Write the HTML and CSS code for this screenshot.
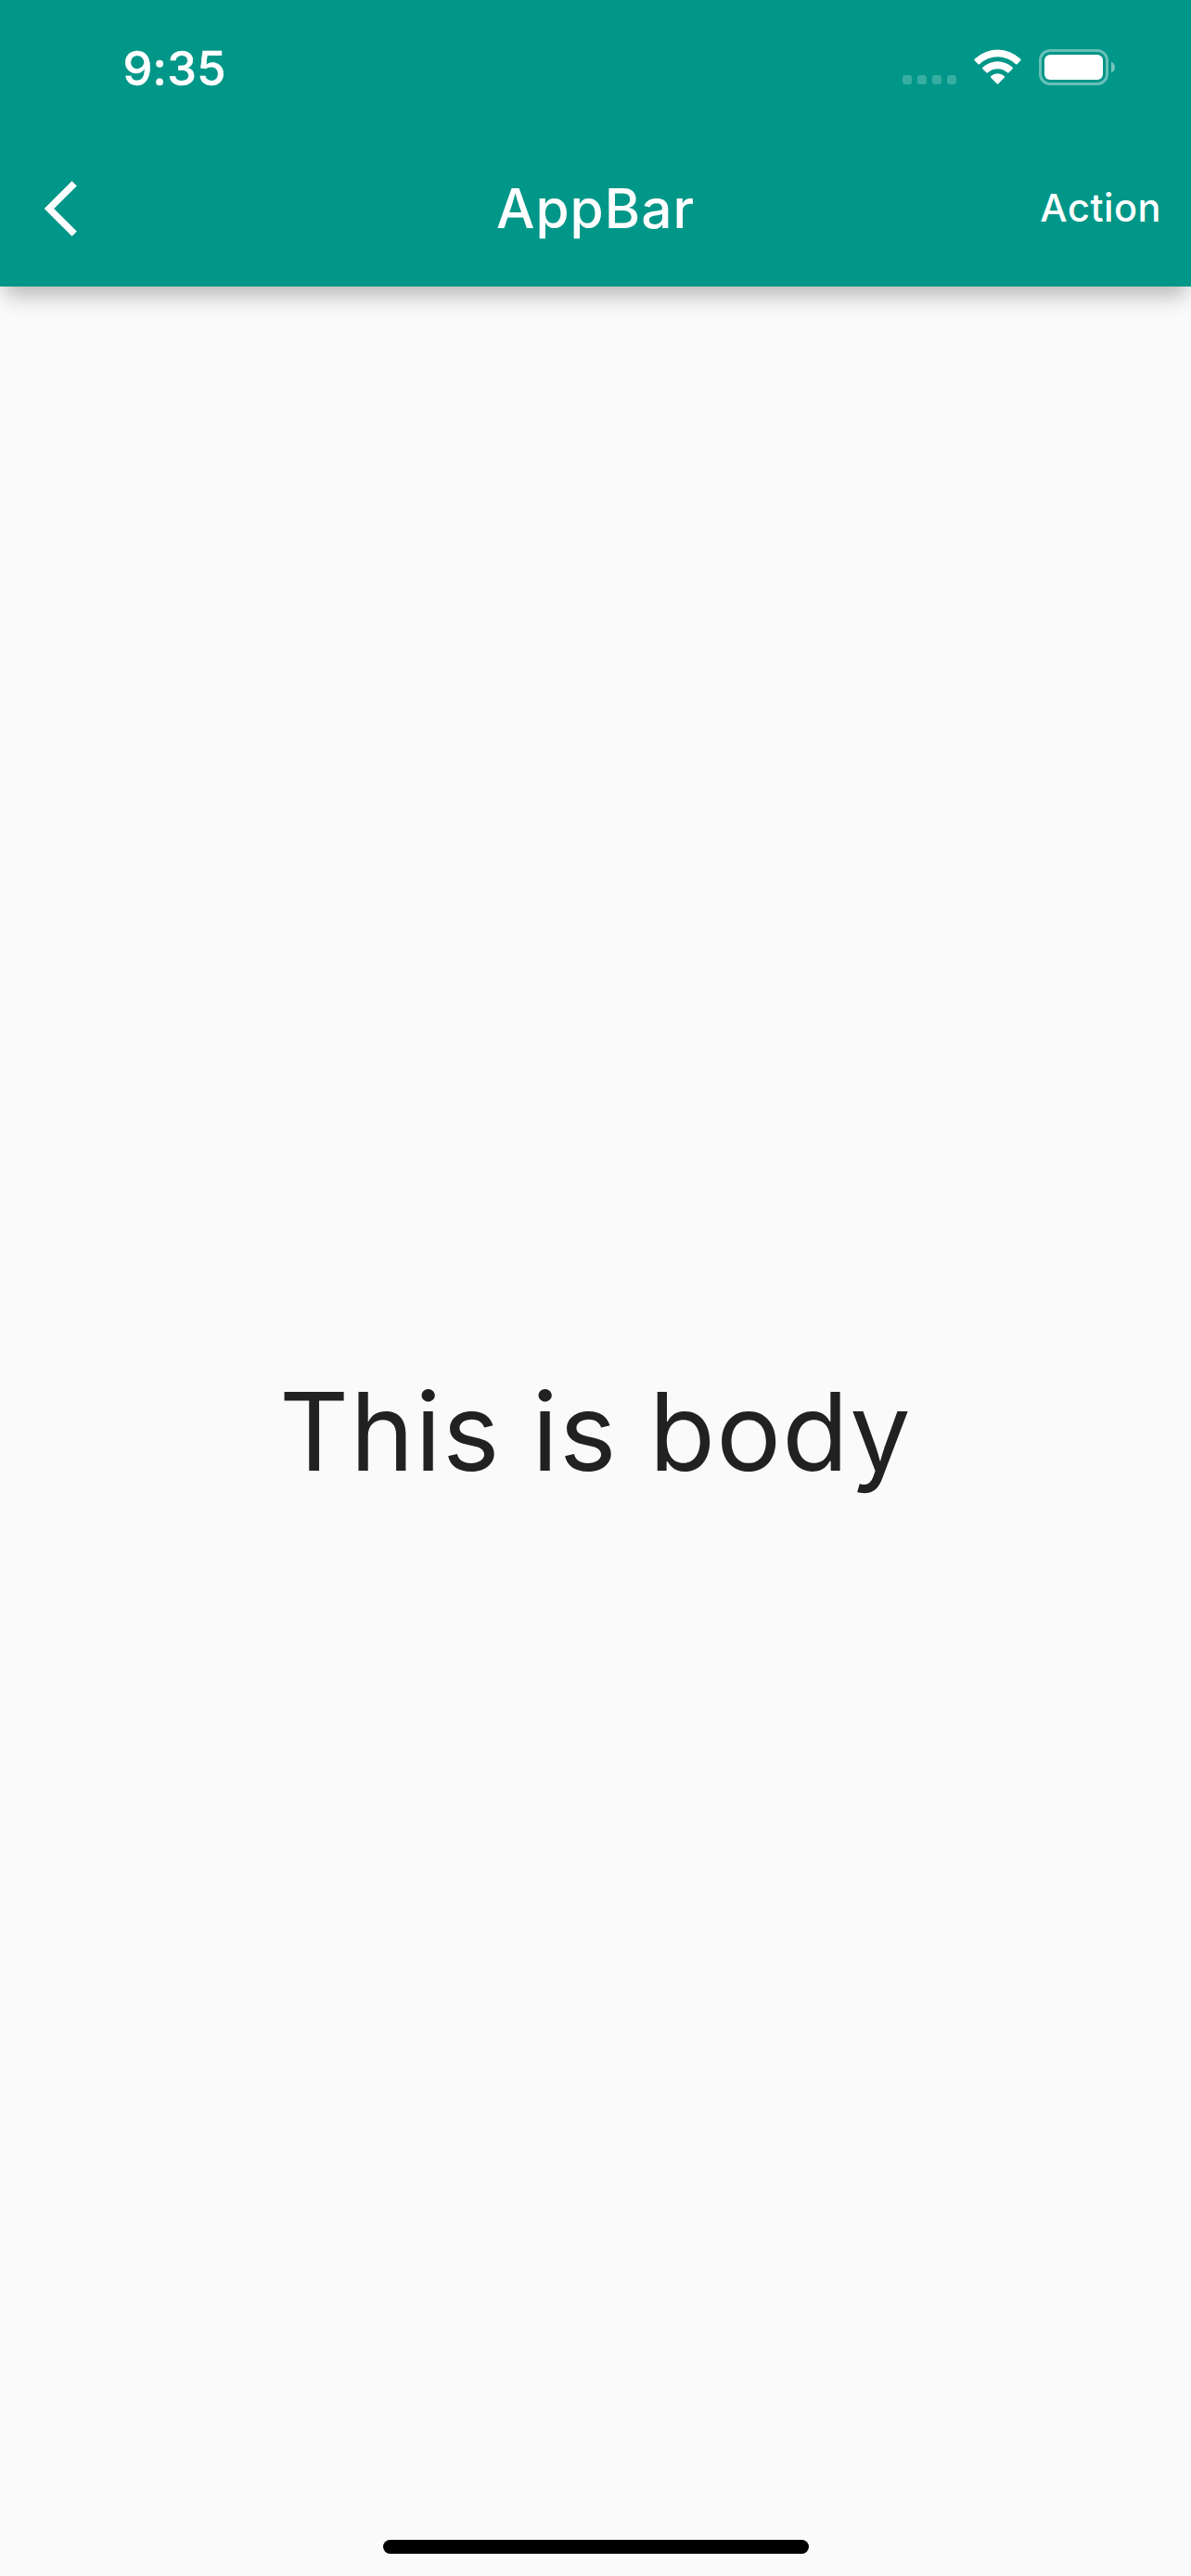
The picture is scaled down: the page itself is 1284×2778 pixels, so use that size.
FILE: index.html
```html
<!DOCTYPE html>
<html lang="en">
<head>
<meta charset="utf-8">
<title>AppBar</title>
<link rel="stylesheet" href="styles.css">
</head>
<body>
<div class="screen">
  <header class="header">
    <div class="status-bar">
      <span class="time">9:35</span>
      <svg class="status-icons" viewBox="0 0 260 70" fill="#fff" aria-hidden="true">
        <g opacity=".22">
          <rect x="13" y="41" width="10" height="10" rx="3"/>
          <rect x="29" y="41" width="10" height="10" rx="3"/>
          <rect x="45" y="41" width="10" height="10" rx="3"/>
          <rect x="61" y="41" width="10" height="10" rx="3"/>
        </g>
        <path d="M90.8 23.6 Q90 24.6 90.9 25.5 L94.5 29.2 Q95.4 30 96.3 29.1 A27.5 27.5 0 0 1 134.7 29.1 Q135.6 30 136.5 29.2 L140.1 25.5 Q141 24.6 140.2 23.6 A35.4 35.4 0 0 0 90.8 23.6Z"/>
        <path d="M99.5 32.6 Q98.6 33.6 99.5 34.5 L103.4 38.3 Q104.2 39 105.1 38.2 A15.6 15.6 0 0 1 125.9 38.2 Q126.8 39 127.6 38.3 L131.5 34.5 Q132.4 33.6 131.5 32.6 A23.5 23.5 0 0 0 99.5 32.6Z"/>
        <path d="M108.3 42 Q107.4 42.9 108.3 43.8 L114.6 50.2 Q115.5 51 116.4 50.2 L122.7 43.8 Q123.6 42.9 122.7 42 A11 11 0 0 0 108.3 42Z"/>
        <rect x="161.5" y="14.5" width="72" height="36" rx="10.5" fill="none" stroke="#fff" stroke-width="3" opacity=".4"/>
        <path d="M238 26.5 Q242 28.5 242 32.5 Q242 36.5 238 38.5Z" opacity=".45"/>
        <rect x="166" y="19" width="63" height="27" rx="6"/>
      </svg>
    </div>
    <nav class="toolbar">
      <button class="back" aria-label="Back">
        <svg class="back-icon" viewBox="0 0 36 60" aria-hidden="true"><path d="M32.2 2.8 L5 30 L32.2 57.2" fill="none" stroke="#fff" stroke-width="7.4"/></svg>
      </button>
      <h1 class="title">AppBar</h1>
      <button class="action">Action</button>
    </nav>
  </header>
  <main class="body"><p class="body-text">This is body</p></main>
  <footer class="footer"><div class="home-indicator"></div></footer>
</div>
</body>
</html>
```
FILE: styles.css
```css
* { box-sizing: border-box; }
body { margin: 0; }
.screen {
  width: 1284px;
  height: 2778px;
  display: flex;
  flex-direction: column;
  background: #fafafa;
  font-family: Inter, "Liberation Sans", sans-serif;
  overflow: hidden;
}
.header {
  height: 309px;
  flex: none;
  background: #009688;
  color: #fff;
  box-shadow: 0 14px 22px -5px rgba(0, 0, 0, .28);
}
.status-bar {
  height: 141px;
  padding: 40px 64px 0 132.5px;
  display: flex;
  justify-content: space-between;
  align-items: flex-start;
}
.time { font-size: 50.5px; line-height: 67px; font-weight: 500; letter-spacing: .3px; -webkit-text-stroke: .5px #fff; }
.status-icons { width: 260px; height: 70px; }
.toolbar {
  height: 168px;
  display: grid;
  grid-template-columns: 1fr auto 1fr;
  align-items: center;
}
button { border: 0; padding: 0; background: none; color: inherit; font-family: inherit; }
.back { justify-self: start; margin-left: 48px; }
.back-icon { display: block; width: 36px; height: 60px; }
.title { margin: 0; font-size: 58.5px; line-height: 72px; font-weight: 500; letter-spacing: 1px; }
.action { justify-self: end; margin: 0 32px 2px 0; font-size: 41.5px; line-height: 60px; font-weight: 500; letter-spacing: .5px; }
.body {
  flex: 1;
  padding-top: 39px;
  display: flex;
  align-items: center;
  justify-content: center;
}
.body-text { margin: 0; font-size: 116.5px; line-height: 144px; letter-spacing: 1.2px; color: #212121; }
.footer { height: 39px; display: flex; justify-content: center; align-items: flex-start; }
.home-indicator { width: 459px; height: 15px; border-radius: 8px; background: #000; }
```
